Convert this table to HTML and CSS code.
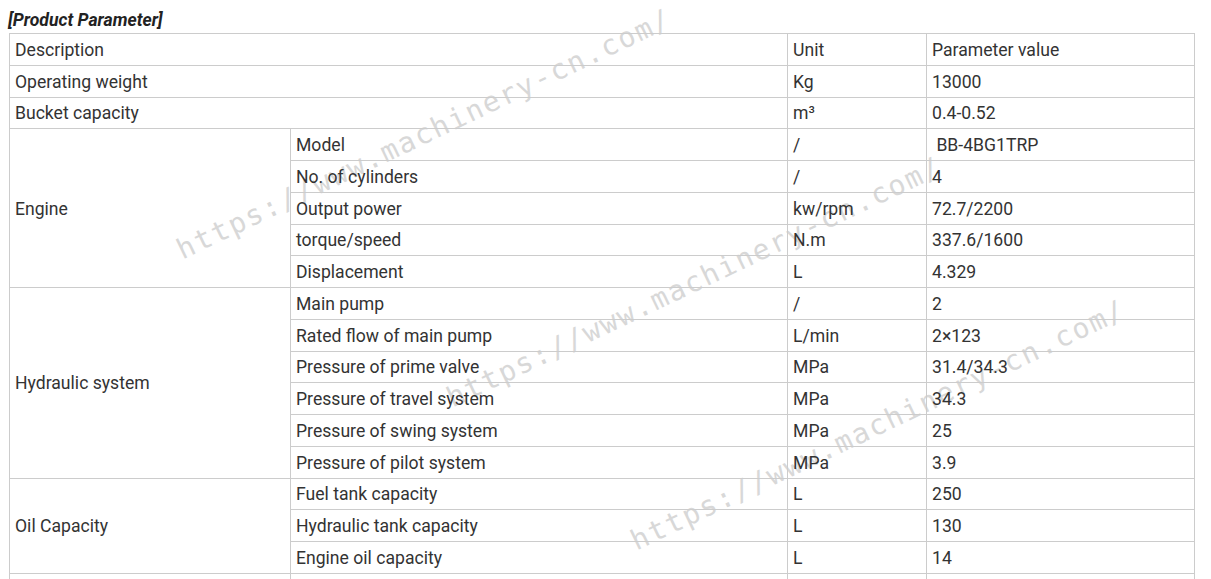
FILE: index.html
```html
<!DOCTYPE html>
<html>
<head>
<meta charset="utf-8">
<link rel="stylesheet" href="styles.css">
</head>
<body>
<div class="page">
  <h3 class="title">[Product Parameter]</h3>
  <table class="params">
    <colgroup>
      <col class="c1"><col class="c2"><col class="c3"><col class="c4">
    </colgroup>
    <tr><td colspan="2">Description</td><td>Unit</td><td>Parameter value</td></tr>
    <tr><td colspan="2">Operating weight</td><td>Kg</td><td>13000</td></tr>
    <tr><td colspan="2">Bucket capacity</td><td>m³</td><td>0.4-0.52</td></tr>
    <tr><td rowspan="5">Engine</td><td>Model</td><td>/</td><td>&nbsp;BB-4BG1TRP</td></tr>
    <tr><td>No. of cylinders</td><td>/</td><td>4</td></tr>
    <tr><td>Output power</td><td>kw/rpm</td><td>72.7/2200</td></tr>
    <tr><td>torque/speed</td><td>N.m</td><td>337.6/1600</td></tr>
    <tr><td>Displacement</td><td>L</td><td>4.329</td></tr>
    <tr><td rowspan="6">Hydraulic system</td><td>Main pump</td><td>/</td><td>2</td></tr>
    <tr><td>Rated flow of main pump</td><td>L/min</td><td>2×123</td></tr>
    <tr><td>Pressure of prime valve</td><td>MPa</td><td>31.4/34.3</td></tr>
    <tr><td>Pressure of travel system</td><td>MPa</td><td>34.3</td></tr>
    <tr><td>Pressure of swing system</td><td>MPa</td><td>25</td></tr>
    <tr><td>Pressure of pilot system</td><td>MPa</td><td>3.9</td></tr>
    <tr><td rowspan="3">Oil Capacity</td><td>Fuel tank capacity</td><td>L</td><td>250</td></tr>
    <tr><td>Hydraulic tank capacity</td><td>L</td><td>130</td></tr>
    <tr><td>Engine oil capacity</td><td>L</td><td>14</td></tr>
    <tr><td>&nbsp;</td><td>&nbsp;</td><td>&nbsp;</td><td>&nbsp;</td></tr>
  </table>
  <span class="wm wm1">https://www.machinery-cn.com/</span>
  <span class="wm wm2">https://www.machinery-cn.com/</span>
  <span class="wm wm3">https://www.machinery-cn.com/</span>
</div>
</body>
</html>
```

FILE: styles.css
```css
html, body {
  margin: 0;
  padding: 0;
  background: #fff;
}
body {
  font-family: Roboto, "Liberation Sans", Arial, sans-serif;
  color: #333;
  overflow: hidden;
}
.page {
  position: relative;
  padding: 10px 0 0 8px;
}
.title {
  margin: 0 0 2.6px 0;
  font-size: 17.6px;
  line-height: 20.6px;
  font-weight: bold;
  font-style: italic;
  color: #222;
}
.params {
  position: relative;
  z-index: 1;
  margin-left: 1px;
  width: 1185px;
  table-layout: fixed;
  border-collapse: collapse;
  font-size: 17.6px;
  line-height: 20.76px;
}
.c1 { width: 281px; }
.c2 { width: 497px; }
.c3 { width: 139px; }
.c4 { width: 268px; }
.params td {
  border: 1px solid #ccc;
  padding: 5.6px 5px 4.4px;
  vertical-align: middle;
  white-space: nowrap;
}
.wm {
  position: absolute;
  z-index: 0;
  font-family: "DejaVu Sans Mono", monospace;
  font-size: 28px;
  letter-spacing: 1.9px;
  color: #d8d8d8;
  white-space: nowrap;
  pointer-events: none;
  transform: translate(-50%, -50%) rotate(-25.5deg);
}
.wm1 { left: 424px; top: 134px; }
.wm2 { left: 694px; top: 282px; }
.wm3 { left: 878px; top: 425px; }
```
